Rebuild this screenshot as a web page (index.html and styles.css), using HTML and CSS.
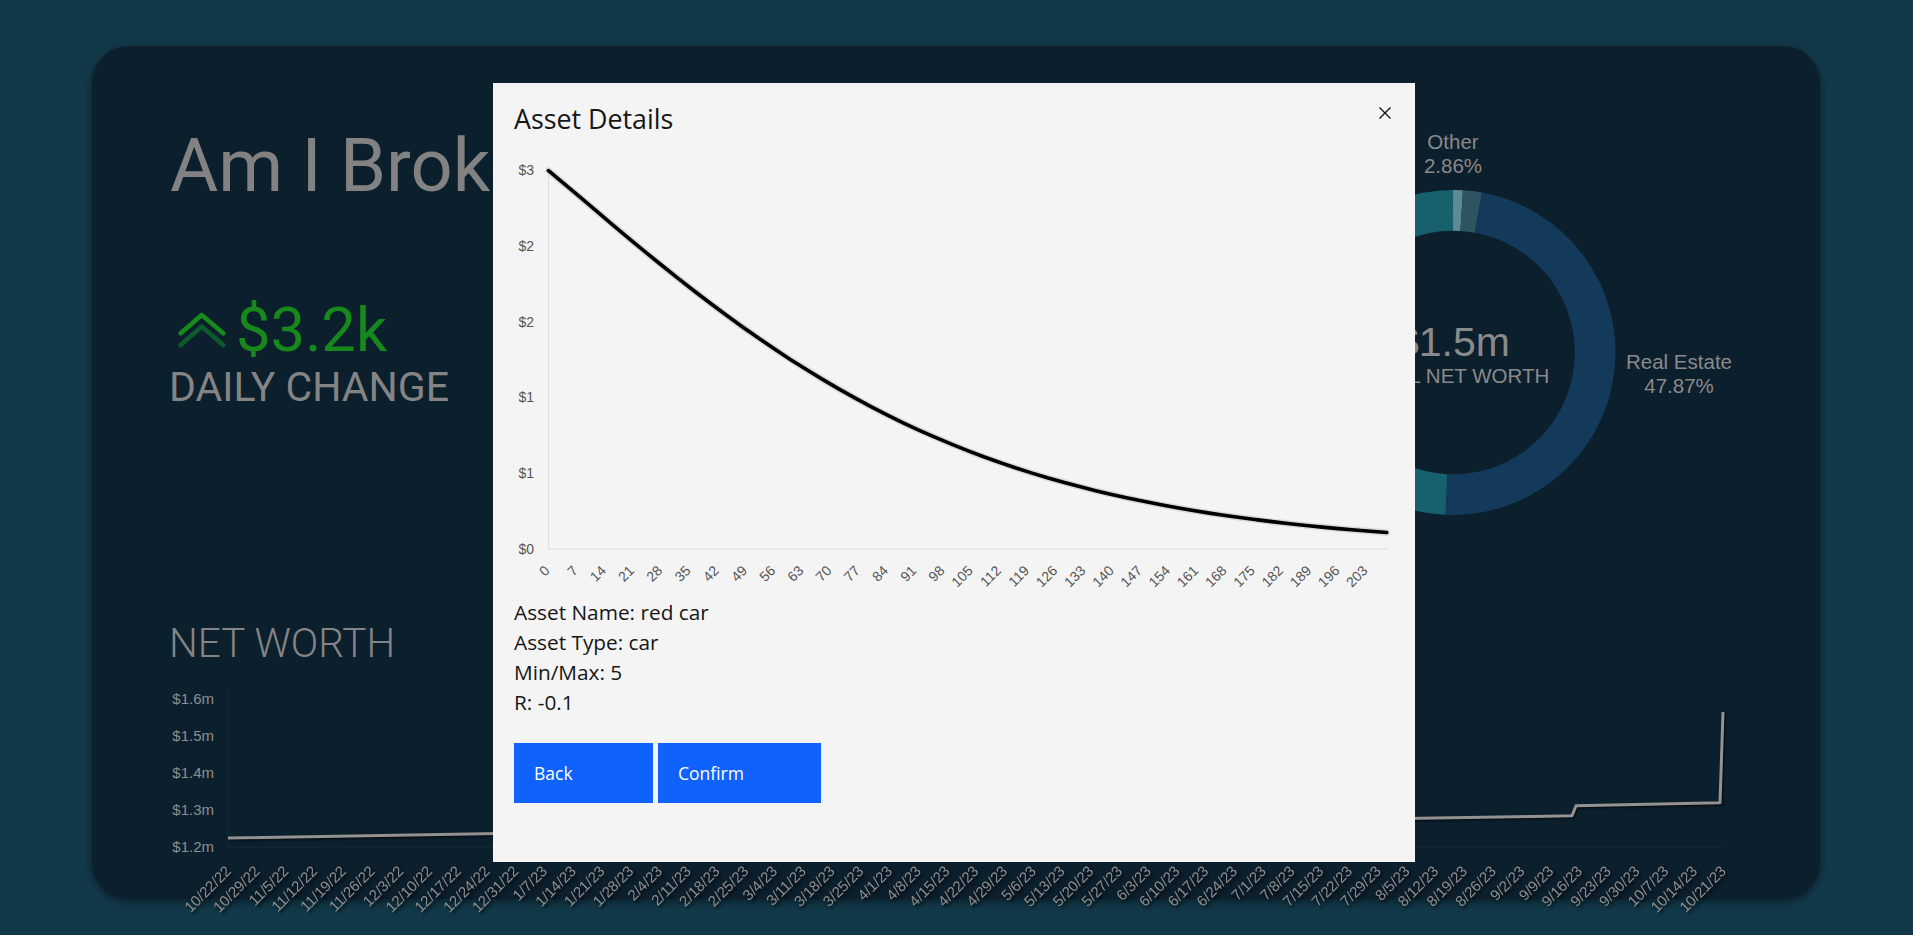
FILE: index.html
```html
<!DOCTYPE html>
<html lang="en">
<head>
<meta charset="utf-8">
<title>Am I Broke?</title>
<link rel="stylesheet" href="styles.css">
</head>
<body>
<main class="card">
  <div class="top-row">
    <div class="intro">
      <h1 class="title">Am I Broke?</h1>
      <div class="change-row">
        <svg class="change-icon" width="48" height="38" viewBox="0 0 48 38">
          <polyline class="chev-back" points="2.7,34 23.7,15.5 45.3,34"/>
          <polyline class="chev-front" points="2.7,22.3 23.7,4 45.3,22.3"/>
        </svg>
        <span class="change-value">$3.2k</span>
      </div>
      <div class="change-label">DAILY CHANGE</div>
    </div>
    <svg class="donut" width="510" height="420" viewBox="0 0 510 420">
      <path class="slice slice-teal" d="M196.55,384.5 A142.15,142.15 0 0 1 203,100.35"/>
      <path class="slice slice-light" d="M203,100.35 A142.15,142.15 0 0 1 211.68,100.62"/>
      <path class="slice slice-grey" d="M211.68,100.62 A142.15,142.15 0 0 1 228.42,102.64"/>
      <path class="slice slice-estate" d="M228.42,102.64 A142.15,142.15 0 0 1 196.55,384.5"/>
      <text class="donut-label" x="203" y="39">Other</text>
      <text class="donut-label" x="203" y="63">2.86%</text>
      <text class="donut-label" x="429" y="258.5">Real Estate</text>
      <text class="donut-label" x="429" y="282.5">47.87%</text>
      <text class="donut-total" x="203" y="246">$1.5m</text>
      <text class="donut-sub" x="203" y="273">TOTAL NET WORTH</text>
    </svg>
  </div>
  <section class="networth">
    <h2 class="section-title">NET WORTH</h2>
    <svg class="nw-chart" width="1589" height="260" viewBox="0 0 1589 260">
      <g class="nw-y">
        <text x="43" y="19" dy=".35em">$1.6m</text>
        <text x="43" y="55.9" dy=".35em">$1.5m</text>
        <text x="43" y="92.9" dy=".35em">$1.4m</text>
        <text x="43" y="129.8" dy=".35em">$1.3m</text>
        <text x="43" y="166.7" dy=".35em">$1.2m</text>
      </g>
      <line class="nw-axis" x1="57" y1="12" x2="57" y2="167"/>
      <line class="nw-axis" x1="57" y1="167" x2="1553" y2="167"/>
      <path class="nw-line" d="M57,158 L1401,135.8 L1405,125.8 L1549,122.8 L1552,32"/>
      <g class="nw-x">
        <text x="61" y="192" transform="rotate(-45 61 192)">10/22/22</text>
        <text x="89.75" y="192" transform="rotate(-45 89.75 192)">10/29/22</text>
        <text x="118.5" y="192" transform="rotate(-45 118.5 192)">11/5/22</text>
        <text x="147.25" y="192" transform="rotate(-45 147.25 192)">11/12/22</text>
        <text x="176" y="192" transform="rotate(-45 176 192)">11/19/22</text>
        <text x="204.75" y="192" transform="rotate(-45 204.75 192)">11/26/22</text>
        <text x="233.5" y="192" transform="rotate(-45 233.5 192)">12/3/22</text>
        <text x="262.25" y="192" transform="rotate(-45 262.25 192)">12/10/22</text>
        <text x="291" y="192" transform="rotate(-45 291 192)">12/17/22</text>
        <text x="319.75" y="192" transform="rotate(-45 319.75 192)">12/24/22</text>
        <text x="348.5" y="192" transform="rotate(-45 348.5 192)">12/31/22</text>
        <text x="377.25" y="192" transform="rotate(-45 377.25 192)">1/7/23</text>
        <text x="406" y="192" transform="rotate(-45 406 192)">1/14/23</text>
        <text x="434.75" y="192" transform="rotate(-45 434.75 192)">1/21/23</text>
        <text x="463.5" y="192" transform="rotate(-45 463.5 192)">1/28/23</text>
        <text x="492.25" y="192" transform="rotate(-45 492.25 192)">2/4/23</text>
        <text x="521" y="192" transform="rotate(-45 521 192)">2/11/23</text>
        <text x="549.75" y="192" transform="rotate(-45 549.75 192)">2/18/23</text>
        <text x="578.5" y="192" transform="rotate(-45 578.5 192)">2/25/23</text>
        <text x="607.25" y="192" transform="rotate(-45 607.25 192)">3/4/23</text>
        <text x="636" y="192" transform="rotate(-45 636 192)">3/11/23</text>
        <text x="664.75" y="192" transform="rotate(-45 664.75 192)">3/18/23</text>
        <text x="693.5" y="192" transform="rotate(-45 693.5 192)">3/25/23</text>
        <text x="722.25" y="192" transform="rotate(-45 722.25 192)">4/1/23</text>
        <text x="751" y="192" transform="rotate(-45 751 192)">4/8/23</text>
        <text x="779.75" y="192" transform="rotate(-45 779.75 192)">4/15/23</text>
        <text x="808.5" y="192" transform="rotate(-45 808.5 192)">4/22/23</text>
        <text x="837.25" y="192" transform="rotate(-45 837.25 192)">4/29/23</text>
        <text x="866" y="192" transform="rotate(-45 866 192)">5/6/23</text>
        <text x="894.75" y="192" transform="rotate(-45 894.75 192)">5/13/23</text>
        <text x="923.5" y="192" transform="rotate(-45 923.5 192)">5/20/23</text>
        <text x="952.25" y="192" transform="rotate(-45 952.25 192)">5/27/23</text>
        <text x="981" y="192" transform="rotate(-45 981 192)">6/3/23</text>
        <text x="1009.75" y="192" transform="rotate(-45 1009.75 192)">6/10/23</text>
        <text x="1038.5" y="192" transform="rotate(-45 1038.5 192)">6/17/23</text>
        <text x="1067.25" y="192" transform="rotate(-45 1067.25 192)">6/24/23</text>
        <text x="1096" y="192" transform="rotate(-45 1096 192)">7/1/23</text>
        <text x="1124.75" y="192" transform="rotate(-45 1124.75 192)">7/8/23</text>
        <text x="1153.5" y="192" transform="rotate(-45 1153.5 192)">7/15/23</text>
        <text x="1182.25" y="192" transform="rotate(-45 1182.25 192)">7/22/23</text>
        <text x="1211" y="192" transform="rotate(-45 1211 192)">7/29/23</text>
        <text x="1239.75" y="192" transform="rotate(-45 1239.75 192)">8/5/23</text>
        <text x="1268.5" y="192" transform="rotate(-45 1268.5 192)">8/12/23</text>
        <text x="1297.25" y="192" transform="rotate(-45 1297.25 192)">8/19/23</text>
        <text x="1326" y="192" transform="rotate(-45 1326 192)">8/26/23</text>
        <text x="1354.75" y="192" transform="rotate(-45 1354.75 192)">9/2/23</text>
        <text x="1383.5" y="192" transform="rotate(-45 1383.5 192)">9/9/23</text>
        <text x="1412.25" y="192" transform="rotate(-45 1412.25 192)">9/16/23</text>
        <text x="1441" y="192" transform="rotate(-45 1441 192)">9/23/23</text>
        <text x="1469.75" y="192" transform="rotate(-45 1469.75 192)">9/30/23</text>
        <text x="1498.5" y="192" transform="rotate(-45 1498.5 192)">10/7/23</text>
        <text x="1527.25" y="192" transform="rotate(-45 1527.25 192)">10/14/23</text>
        <text x="1556" y="192" transform="rotate(-45 1556 192)">10/21/23</text>
      </g>
    </svg>
  </section>
</main>

<div class="modal" role="dialog" aria-label="Asset Details">
  <h2 class="modal-title">Asset Details</h2>
  <svg class="modal-close" width="16" height="16" viewBox="0 0 16 16" aria-label="Close">
    <path d="M2.5 2.5 L13.5 13.5 M13.5 2.5 L2.5 13.5"/>
  </svg>
  <svg class="asset-chart" width="880" height="447" viewBox="0 0 880 447">
    <line class="ac-axis" x1="34.5" y1="20" x2="34.5" y2="399"/>
    <line class="ac-axis" x1="34.5" y1="399" x2="873" y2="399"/>
    <g class="ac-y">
      <text x="20" y="20" dy=".35em">$3</text>
      <text x="20" y="95.8" dy=".35em">$2</text>
      <text x="20" y="171.6" dy=".35em">$2</text>
      <text x="20" y="247.4" dy=".35em">$1</text>
      <text x="20" y="323.2" dy=".35em">$1</text>
      <text x="20" y="399" dy=".35em">$0</text>
    </g>
    <path class="ac-halo" d="M34.5,20.6 L50.6,34.2 L66.7,47.7 L82.9,61.4 L99,75.1 L115.1,88.6 L131.2,101.9 L147.4,115 L163.5,127.9 L179.6,140.5 L195.7,152.8 L211.8,164.8 L227.9,176.5 L244.1,187.8 L260.2,198.8 L276.3,209.4 L292.4,219.6 L308.5,229.4 L324.7,238.9 L340.8,247.9 L356.9,256.6 L373,264.9 L389.1,272.8 L405.3,280.3 L421.4,287.4 L437.5,294.2 L453.6,300.7 L469.7,306.8 L485.9,312.5 L502,318 L518.1,323.1 L534.2,328 L550.3,332.5 L566.5,336.8 L582.6,340.9 L598.7,344.7 L614.8,348.3 L630.9,351.6 L647.1,354.8 L663.2,357.8 L679.3,360.5 L695.4,363.1 L711.5,365.5 L727.7,367.8 L743.8,369.9 L759.9,371.9 L776,373.7 L792.1,375.5 L808.3,377.1 L824.4,378.6 L840.5,380 L856.6,381.3 L872.7,382.5"/>
    <path class="ac-line" d="M34.5,20.6 L50.6,34.2 L66.7,47.7 L82.9,61.4 L99,75.1 L115.1,88.6 L131.2,101.9 L147.4,115 L163.5,127.9 L179.6,140.5 L195.7,152.8 L211.8,164.8 L227.9,176.5 L244.1,187.8 L260.2,198.8 L276.3,209.4 L292.4,219.6 L308.5,229.4 L324.7,238.9 L340.8,247.9 L356.9,256.6 L373,264.9 L389.1,272.8 L405.3,280.3 L421.4,287.4 L437.5,294.2 L453.6,300.7 L469.7,306.8 L485.9,312.5 L502,318 L518.1,323.1 L534.2,328 L550.3,332.5 L566.5,336.8 L582.6,340.9 L598.7,344.7 L614.8,348.3 L630.9,351.6 L647.1,354.8 L663.2,357.8 L679.3,360.5 L695.4,363.1 L711.5,365.5 L727.7,367.8 L743.8,369.9 L759.9,371.9 L776,373.7 L792.1,375.5 L808.3,377.1 L824.4,378.6 L840.5,380 L856.6,381.3 L872.7,382.5"/>
    <g class="ac-x">
      <text x="36.5" y="421.6" transform="rotate(-45 36.5 421.6)">0</text>
      <text x="64.7" y="421.6" transform="rotate(-45 64.7 421.6)">7</text>
      <text x="92.9" y="421.6" transform="rotate(-45 92.9 421.6)">14</text>
      <text x="121.1" y="421.6" transform="rotate(-45 121.1 421.6)">21</text>
      <text x="149.3" y="421.6" transform="rotate(-45 149.3 421.6)">28</text>
      <text x="177.6" y="421.6" transform="rotate(-45 177.6 421.6)">35</text>
      <text x="205.8" y="421.6" transform="rotate(-45 205.8 421.6)">42</text>
      <text x="234" y="421.6" transform="rotate(-45 234 421.6)">49</text>
      <text x="262.2" y="421.6" transform="rotate(-45 262.2 421.6)">56</text>
      <text x="290.4" y="421.6" transform="rotate(-45 290.4 421.6)">63</text>
      <text x="318.6" y="421.6" transform="rotate(-45 318.6 421.6)">70</text>
      <text x="346.8" y="421.6" transform="rotate(-45 346.8 421.6)">77</text>
      <text x="375" y="421.6" transform="rotate(-45 375 421.6)">84</text>
      <text x="403.2" y="421.6" transform="rotate(-45 403.2 421.6)">91</text>
      <text x="431.4" y="421.6" transform="rotate(-45 431.4 421.6)">98</text>
      <text x="459.7" y="421.6" transform="rotate(-45 459.7 421.6)">105</text>
      <text x="487.9" y="421.6" transform="rotate(-45 487.9 421.6)">112</text>
      <text x="516.1" y="421.6" transform="rotate(-45 516.1 421.6)">119</text>
      <text x="544.3" y="421.6" transform="rotate(-45 544.3 421.6)">126</text>
      <text x="572.5" y="421.6" transform="rotate(-45 572.5 421.6)">133</text>
      <text x="600.7" y="421.6" transform="rotate(-45 600.7 421.6)">140</text>
      <text x="628.9" y="421.6" transform="rotate(-45 628.9 421.6)">147</text>
      <text x="657.1" y="421.6" transform="rotate(-45 657.1 421.6)">154</text>
      <text x="685.3" y="421.6" transform="rotate(-45 685.3 421.6)">161</text>
      <text x="713.5" y="421.6" transform="rotate(-45 713.5 421.6)">168</text>
      <text x="741.8" y="421.6" transform="rotate(-45 741.8 421.6)">175</text>
      <text x="770" y="421.6" transform="rotate(-45 770 421.6)">182</text>
      <text x="798.2" y="421.6" transform="rotate(-45 798.2 421.6)">189</text>
      <text x="826.4" y="421.6" transform="rotate(-45 826.4 421.6)">196</text>
      <text x="854.6" y="421.6" transform="rotate(-45 854.6 421.6)">203</text>
    </g>
  </svg>
  <div class="asset-info">
    <p>Asset Name: red car</p>
    <p>Asset Type: car</p>
    <p>Min/Max: 5</p>
    <p>R: -0.1</p>
  </div>
  <div class="actions">
    <button class="btn btn-back" type="button">Back</button>
    <button class="btn btn-confirm" type="button">Confirm</button>
  </div>
</div>
</body>
</html>
```

FILE: styles.css
```css
* {
  box-sizing: border-box;
}

html,
body {
  margin: 0;
  padding: 0;
}

body {
  width: 1913px;
  height: 935px;
  overflow: hidden;
  background: #12394a;
  font-family: Roboto, "Liberation Sans", Arial, sans-serif;
}

/* ---------- dashboard card ---------- */
.card {
  margin: 46px 0 0 92px;
  width: 1728px;
  height: 853px;
  padding: 64px 60px 0 79px;
  background: #0c1f2d;
  border-radius: 37px;
  box-shadow: 0 3px 10px rgba(0, 0, 0, 0.45);
  color: #848484;
}

.top-row {
  display: flex;
  justify-content: space-between;
  align-items: flex-start;
  height: 420px;
}

.intro {
  display: flex;
  flex-direction: column;
}

.title {
  margin: 19px 0 0 -1px;
  font-size: 74px;
  line-height: 74px;
  font-weight: 400;
  color: #828282;
  white-space: nowrap;
}

.change-row {
  display: flex;
  align-items: flex-start;
  margin-top: 97px;
  height: 60px;
}

.change-icon {
  display: block;
  margin: 11px 0 0 7px;
}

.chev-front,
.chev-back {
  fill: none;
  stroke-width: 4.5;
  stroke-linecap: round;
  stroke-linejoin: round;
}

.chev-front {
  stroke: #178a1c;
}

.chev-back {
  stroke: #0f5a2c;
}

.change-value {
  margin-left: 10px;
  font-size: 61.5px;
  line-height: 60px;
  color: #17881b;
}

.change-label {
  margin: 6.5px 0 0 -2px;
  font-size: 41px;
  line-height: 40px;
  white-space: nowrap;
}

/* donut */
.donut {
  display: block;
  overflow: visible;
}

.slice {
  fill: none;
  stroke-width: 40.7;
}

.slice-teal {
  stroke: #17606d;
}

.slice-light {
  stroke: #5b8b95;
}

.slice-grey {
  stroke: #2e5461;
}

.slice-estate {
  stroke: #133a5b;
}

.donut-label,
.donut-total,
.donut-sub {
  font-family: "Liberation Sans", Arial, sans-serif;
  fill: #8a8a8a;
  text-anchor: middle;
}

.donut-label {
  font-size: 20.5px;
}

.donut-total {
  font-size: 41px;
}

.donut-sub {
  font-size: 20.5px;
}

/* net worth */
.networth {
  margin-top: 93px;
}

.section-title {
  margin: 0 0 0 -2px;
  font-size: 40.5px;
  line-height: 40px;
  font-weight: 300;
  color: #848484;
}

.nw-chart {
  display: block;
  margin-top: 17px;
  overflow: visible;
}

.nw-y text {
  font-family: "Liberation Sans", Arial, sans-serif;
  font-size: 15px;
  fill: #8e8e8e;
  text-anchor: end;
}

.nw-axis {
  stroke: #172a38;
  stroke-width: 1;
}

.nw-line {
  fill: none;
  stroke: #939393;
  stroke-width: 3;
  stroke-linejoin: round;
  filter: drop-shadow(1px 1px 1px rgba(0, 0, 0, 0.7));
}

.nw-x {
  filter: drop-shadow(2px 2px 1.5px rgba(0, 0, 0, 0.75));
}

.nw-x text {
  font-family: "Liberation Sans", Arial, sans-serif;
  font-size: 15px;
  fill: #8e8e8e;
  text-anchor: end;
}

/* ---------- modal ---------- */
.modal {
  position: fixed;
  left: 493px;
  top: 83px;
  width: 922px;
  height: 779px;
  padding: 20px 21px;
  background: #f4f4f4;
  color: #161616;
  font-family: "Open Sans", "Liberation Sans", sans-serif;
}

.modal-title {
  margin: 0;
  font-size: 26.8px;
  line-height: 32px;
  font-weight: 400;
}

.modal-close {
  position: absolute;
  top: 21.5px;
  right: 22px;
}

.modal-close path {
  stroke: #161616;
  stroke-width: 1.4;
  fill: none;
}

.asset-chart {
  display: block;
  margin-top: 15px;
  overflow: visible;
}

.ac-axis {
  stroke: #dcdcdc;
  stroke-width: 1;
}

.ac-y text,
.ac-x text {
  font-family: "Liberation Sans", Arial, sans-serif;
  font-size: 14px;
  fill: #555;
}

.ac-y text {
  text-anchor: end;
}

.ac-x text {
  text-anchor: end;
}

.ac-halo {
  fill: none;
  stroke: #d8d8d8;
  stroke-width: 6.5;
  stroke-linejoin: round;
  stroke-linecap: round;
}

.ac-line {
  fill: none;
  stroke: #000;
  stroke-width: 3.6;
  stroke-linejoin: round;
  stroke-linecap: round;
}

.asset-info p {
  margin: 0;
  font-size: 20.8px;
  line-height: 30px;
}

.actions {
  display: flex;
  gap: 5px;
  margin-top: 26px;
}

.btn {
  display: flex;
  align-items: center;
  height: 60px;
  padding: 0 0 0 20px;
  border: 0;
  border-radius: 0;
  background: #0f62fe;
  color: #fff;
  font-family: "Open Sans", "Liberation Sans", sans-serif;
  font-size: 17.5px;
  text-align: left;
  cursor: pointer;
}

.btn-back {
  width: 139px;
}

.btn-confirm {
  width: 163px;
}
```
